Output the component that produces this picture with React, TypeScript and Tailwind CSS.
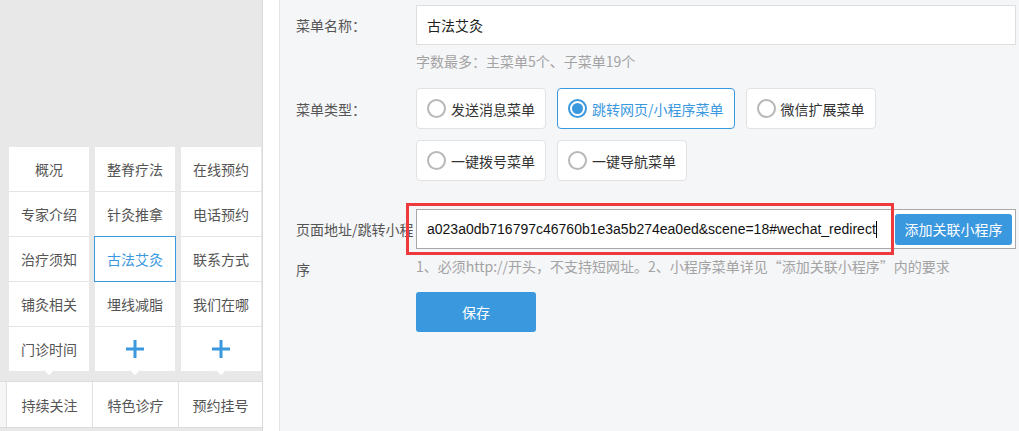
import React from "react";

const cols: string[][] = [
  ["概况", "专家介绍", "治疗须知", "铺灸相关", "门诊时间"],
  ["整脊疗法", "针灸推拿", "古法艾灸", "埋线减脂", "+"],
  ["在线预约", "电话预约", "联系方式", "我们在哪", "+"],
];

const Plus = () => (
  <svg width="18" height="18" viewBox="0 0 18 18">
    <rect x="7.5" y="0" width="3" height="18" fill="#3a98df" />
    <rect x="0" y="7.5" width="18" height="3" fill="#3a98df" />
  </svg>
);

const Radio = ({ label, checked }: { label: string; checked?: boolean }) => (
  <div
    className={`h-[41px] px-[10px] flex items-center gap-[5px] bg-white rounded-[4px] border ${
      checked ? "border-[#3a98df]" : "border-[#e2e2e2]"
    }`}
  >
    {checked ? (
      <span className="w-[19px] h-[19px] rounded-full border-2 border-[#3a98df] flex items-center justify-center">
        <span className="w-[11px] h-[11px] rounded-full bg-[#3a98df]" />
      </span>
    ) : (
      <span className="w-[19px] h-[19px] rounded-full border-2 border-[#b8b8b8]" />
    )}
    <span className={`text-[14px] leading-[20px] ${checked ? "text-[#3a98df]" : "text-[#333]"}`}>{label}</span>
  </div>
);

export default function App() {
  return (
    <div className="w-[1019px] h-[431px] overflow-hidden flex font-['Noto_Sans_CJK_SC','Liberation_Sans',sans-serif]">
      {/* left phone preview */}
      <div className="w-[263px] shrink-0 bg-[#e8e8e8] border-r border-[#dadada] flex flex-col pt-[147px]">
        <div className="flex pl-[9px] gap-[6px]">
          {cols.map((col, ci) => (
            <div key={ci} className="w-[80px] relative">
              <div className="flex flex-col gap-px bg-[#e4e4e4]">
                {col.map((item, ri) => {
                  const selected = item === "古法艾灸";
                  return (
                    <div key={ri} className="h-[44px] bg-white flex items-center justify-center relative">
                      {item === "+" ? (
                        <Plus />
                      ) : (
                        <span className={`text-[14px] leading-[20px] ${selected ? "text-[#3a98df]" : "text-[#555]"}`}>
                          {item}
                        </span>
                      )}
                      {selected && (
                        <div className="absolute -left-px -right-px -top-px -bottom-px border border-[#3a98df]" />
                      )}
                    </div>
                  );
                })}
              </div>
              <div className="absolute left-1/2 -bottom-[4px] -ml-[4px] w-[8px] h-[8px] bg-white rotate-45 border-r border-b border-[#e4e4e4]" />
            </div>
          ))}
        </div>
        <div className="mt-[10px] h-[47px] bg-white border-y border-[#dcdcdc] flex">
          <div className="w-[6px] bg-[#f6f6f6]" />
          {["持续关注", "特色诊疗", "预约挂号"].map((t, i) => (
            <div
              key={t}
              className={`${i === 2 ? "w-[84px]" : "w-[86px]"} border-l border-[#e0e0e0] flex items-center justify-center text-[14px] leading-[20px] text-[#555]`}
            >
              {t}
            </div>
          ))}
        </div>
      </div>
      <div className="w-[17px] shrink-0 bg-white border-r border-[#e4e4e4]" />

      {/* right form */}
      <div className="flex-1 bg-[#f5f6f8] pl-[16px] pt-[5px] text-[14px]">
        {/* name */}
        <div className="flex">
          <div className="w-[120px] h-[40px] flex items-center text-[#555] leading-[20px]">菜单名称：</div>
          <div>
            <div className="w-[600px] h-[40px] bg-white border border-[#dedede] flex items-center pl-[10px] text-[#222] leading-[20px]">
              古法艾灸
            </div>
            <div className="mt-[6px] leading-[20px] text-[#a3a3a3]">字数最多：主菜单5个、子菜单19个</div>
          </div>
        </div>

        {/* type */}
        <div className="flex mt-[17px]">
          <div className="w-[120px] h-[41px] flex items-center text-[#555] leading-[20px]">菜单类型：</div>
          <div className="flex flex-col gap-[11px]">
            <div className="flex gap-[11px]">
              <Radio label="发送消息菜单" />
              <Radio label="跳转网页/小程序菜单" checked />
              <Radio label="微信扩展菜单" />
            </div>
            <div className="flex gap-[11px]">
              <Radio label="一键拨号菜单" />
              <Radio label="一键导航菜单" />
            </div>
          </div>
        </div>

        {/* url */}
        <div className="flex mt-[28px]">
          <div className="w-[120px] text-[#555] leading-[40px] break-all">页面地址/跳转小程序</div>
          <div>
            <div className="relative w-[600px] h-[40px] bg-white border border-[#a8a8a8] flex items-center">
              <div className="flex-1 h-full flex items-center pl-[10px] text-[#111] leading-[20px] whitespace-nowrap overflow-hidden font-['Liberation_Sans',sans-serif]">
                a023a0db716797c46760b1e3a5b274ea0ed&amp;scene=18#wechat_redirect
                <span className="inline-block w-px h-[17px] bg-black" />
              </div>
              <div className="w-[117px] h-[31px] mr-[3px] rounded-[3px] bg-[#3a98df] text-white flex items-center justify-center leading-[20px]">
                添加关联小程序
              </div>
              <div className="absolute left-[-11px] top-[-7px] w-[488px] h-[52px] border-[3px] border-[#ef3a3d]" />
            </div>
            <div className="mt-[7px] leading-[20px] text-[#a3a3a3] whitespace-nowrap">
              1、必须http://开头，不支持短网址。2、小程序菜单详见“添加关联小程序”内的要求
            </div>
            <div className="mt-[16px] w-[120px] h-[40px] rounded-[3px] bg-[#3a98df] text-white flex items-center justify-center leading-[20px]">
              保存
            </div>
          </div>
        </div>
      </div>
    </div>
  );
}
